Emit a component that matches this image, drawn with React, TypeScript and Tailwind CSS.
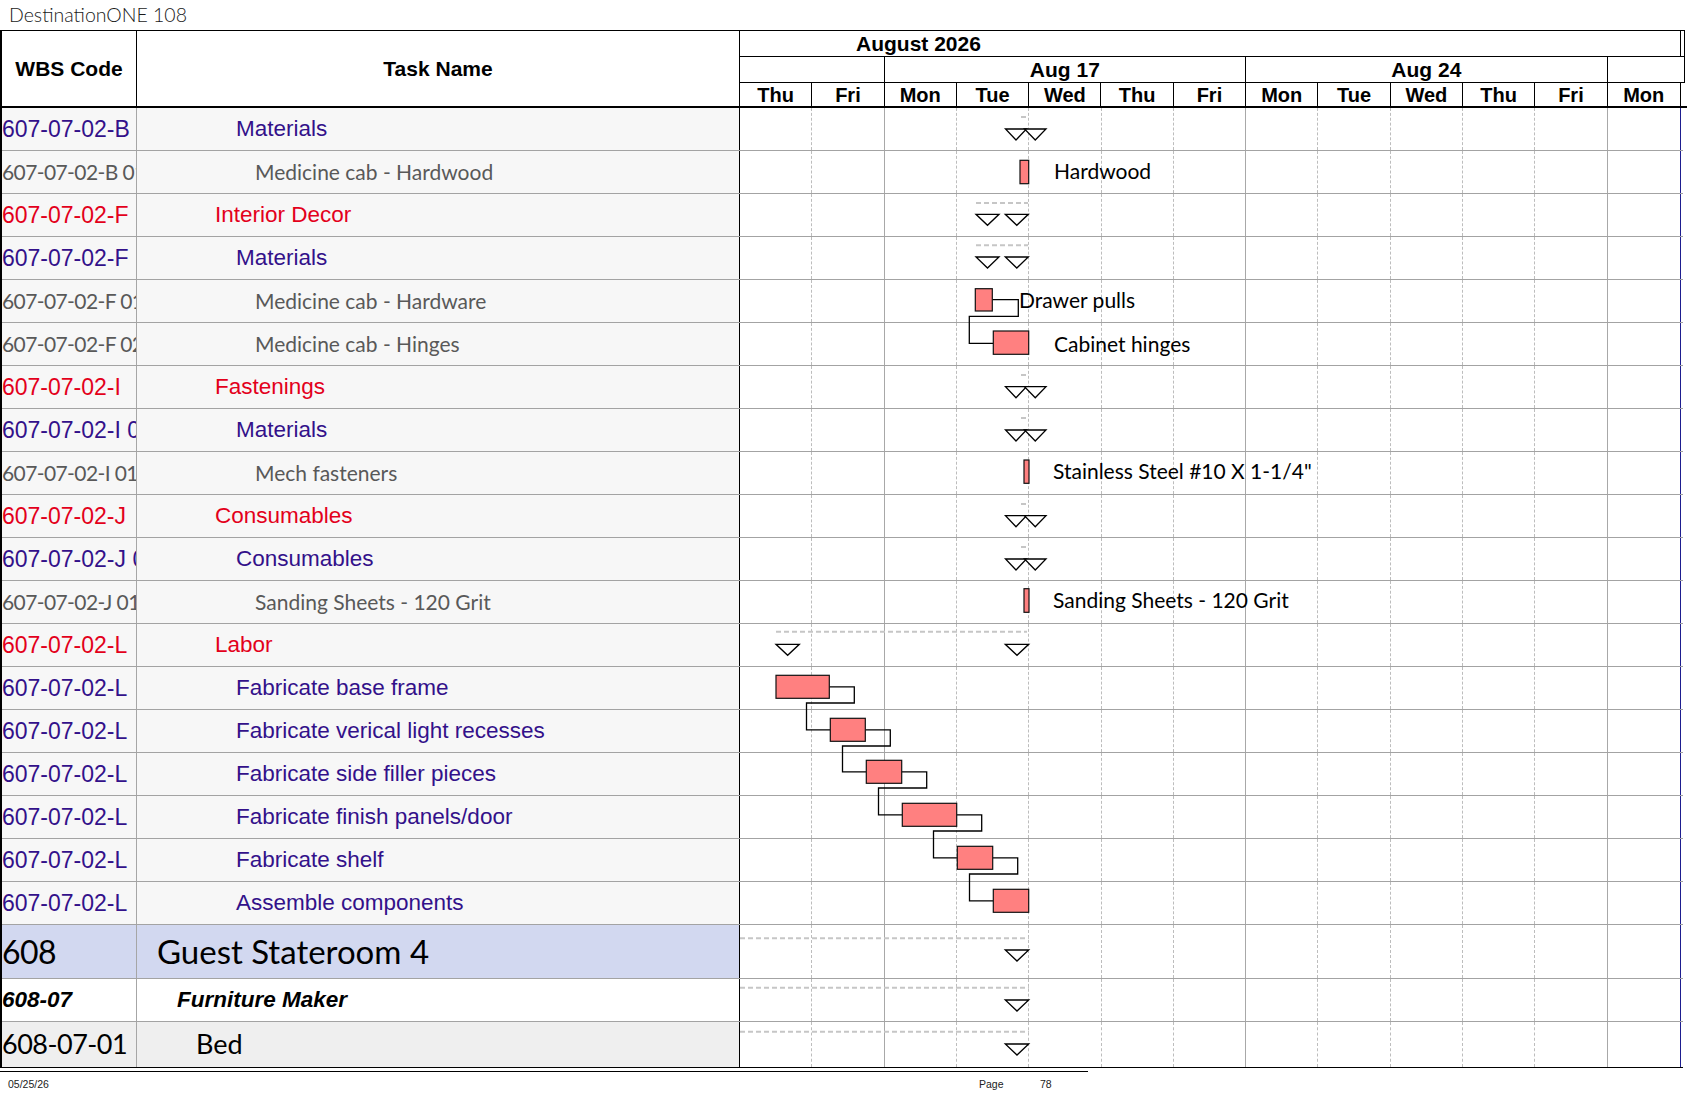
import React from "react";

const ARIAL = "font-['Liberation_Sans',Arial,sans-serif]";
const CALI = "font-['Lato','Carlito',sans-serif]";

const DAYS = ["Thu", "Fri", "Mon", "Tue", "Wed", "Thu", "Fri", "Mon", "Tue", "Wed", "Thu", "Fri", "Mon"];

type Kind = "s1" | "s2" | "t";

const rows: { code: string; name: string; kind: Kind }[] = [
  { code: "607-07-02-B", name: "Materials", kind: "s2" },
  { code: "607-07-02-B 01", name: "Medicine cab - Hardwood", kind: "t" },
  { code: "607-07-02-F", name: "Interior Decor", kind: "s1" },
  { code: "607-07-02-F", name: "Materials", kind: "s2" },
  { code: "607-07-02-F 01", name: "Medicine cab - Hardware", kind: "t" },
  { code: "607-07-02-F 02", name: "Medicine cab - Hinges", kind: "t" },
  { code: "607-07-02-I", name: "Fastenings", kind: "s1" },
  { code: "607-07-02-I 01", name: "Materials", kind: "s2" },
  { code: "607-07-02-I 01 01", name: "Mech fasteners", kind: "t" },
  { code: "607-07-02-J", name: "Consumables", kind: "s1" },
  { code: "607-07-02-J 01", name: "Consumables", kind: "s2" },
  { code: "607-07-02-J 01 01", name: "Sanding Sheets - 120 Grit", kind: "t" },
  { code: "607-07-02-L", name: "Labor", kind: "s1" },
  { code: "607-07-02-L", name: "Fabricate base frame", kind: "s2" },
  { code: "607-07-02-L", name: "Fabricate verical light recesses", kind: "s2" },
  { code: "607-07-02-L", name: "Fabricate side filler pieces", kind: "s2" },
  { code: "607-07-02-L", name: "Fabricate finish panels/door", kind: "s2" },
  { code: "607-07-02-L", name: "Fabricate shelf", kind: "s2" },
  { code: "607-07-02-L", name: "Assemble components", kind: "s2" },
];

const codeStyle: Record<Kind, string> = {
  s1: `${ARIAL} text-[23px] text-[#e3001b]`,
  s2: `${ARIAL} text-[23px] text-[#33118a]`,
  t: `${CALI} text-[21px] tracking-[-0.6px] text-[#595959]`,
};

const nameStyle: Record<Kind, string> = {
  s1: `${ARIAL} text-[22.5px] text-[#e3001b] pl-[78px]`,
  s2: `${ARIAL} text-[22.5px] text-[#33118a] pl-[99px]`,
  t: `${CALI} text-[21px] text-[#595959] pl-[118px]`,
};

function DayGrid() {
  return (
    <div className="grid h-full grid-cols-[repeat(13,minmax(0,1fr))]">
      {DAYS.map((_, i) => (
        <div
          key={i}
          className={
            i === 12
              ? ""
              : i === 1 || i === 6 || i === 11
              ? "border-r border-[#a8a8a8]"
              : "border-r border-dashed border-[#bdbdbd]"
          }
        />
      ))}
    </div>
  );
}

// summary milestones (triangles) : x, top, width
const tris: [number, number, number][] = [
  [1005.5, 129, 21], [1024.5, 129, 21.5],
  [976, 214.3, 23], [1005.3, 214.3, 23],
  [976, 257, 23], [1005.3, 257, 23],
  [1005.5, 386.7, 21], [1024.5, 386.7, 21.5],
  [1005.5, 430, 21], [1024.5, 430, 21.5],
  [1005.5, 515.7, 21], [1024.5, 515.7, 21.5],
  [1005.5, 559, 21], [1024.5, 559, 21.5],
  [776, 644.3, 23.3], [1005.3, 644.3, 23.4],
  [1005.3, 950, 23.4],
  [1005.3, 1000, 23.4],
  [1005.3, 1044, 23.4],
];

// summary dashed lines: y, x1, x2
const dashes: [number, number, number][] = [
  [117, 1021, 1029],
  [203, 976, 1028],
  [245.3, 976, 1028],
  [375, 1021, 1029],
  [418, 1021, 1029],
  [504, 1021, 1029],
  [547, 1021, 1029],
  [631.7, 776, 1027],
  [938.3, 740, 1029],
  [987.7, 740, 1029],
  [1031.7, 740, 1029],
];

const bars = [
  { x: 1020, y: 160.3, w: 8.7, h: 23.4 },
  { x: 975.3, y: 288.7, w: 17, h: 22.3 },
  { x: 993.3, y: 331, w: 35.4, h: 23.3 },
  { x: 1024, y: 460, w: 5, h: 23.3 },
  { x: 1024, y: 588.7, w: 5, h: 23.6 },
];

const labor = [
  { x: 776, y: 675.3, w: 53.3 },
  { x: 830.3, y: 718.3, w: 35 },
  { x: 866.3, y: 760.3, w: 35.4 },
  { x: 902.3, y: 803.3, w: 54.4 },
  { x: 957.3, y: 846.3, w: 35.4 },
  { x: 993.3, y: 889.3, w: 35.4 },
];

function ChartArt() {
  const links = labor.slice(0, -1).map((b, i) => {
    const n = labor[i + 1];
    const y1 = b.y + 11.5;
    const xr = b.x + b.w + 25;
    const yd = b.y + 23 + 4.7;
    const xl = n.x - 23.8;
    const y2 = n.y + 11.5;
    return `M${b.x + b.w} ${y1}H${xr}V${yd}H${xl}V${y2}H${n.x}`;
  });
  return (
    <svg
      className="pointer-events-none absolute left-0 top-0"
      width={1687}
      height={960}
      viewBox="0 108 1687 960"
    >
      {dashes.map(([y, x1, x2], i) => (
        <line key={i} x1={x1} x2={x2} y1={y} y2={y} stroke="#c6c6c6" strokeWidth={2} strokeDasharray="5 3" />
      ))}
      {tris.map(([x, y, w], i) => (
        <polygon
          key={i}
          points={`${x},${y} ${x + w},${y} ${x + w / 2},${y + 11}`}
          fill="white"
          stroke="#000"
          strokeWidth={1.3}
        />
      ))}
      <path d="M992.3 299.7H1018.3V316.3H969.3V343.3H993.3" fill="none" stroke="#000" strokeWidth={1.3} />
      {links.map((d, i) => (
        <path key={i} d={d} fill="none" stroke="#000" strokeWidth={1.3} />
      ))}
      {bars.map((b, i) => (
        <rect key={i} x={b.x} y={b.y} width={b.w} height={b.h} fill="#ff8080" stroke="#111" strokeWidth={1.2} />
      ))}
      {labor.map((b, i) => (
        <rect key={i} x={b.x} y={b.y} width={b.w} height={23} fill="#ff8080" stroke="#111" strokeWidth={1.2} />
      ))}
    </svg>
  );
}

function Labels() {
  const cls = `${CALI} absolute h-[26px] whitespace-nowrap text-[21px] leading-[26px] text-black`;
  return (
    <>
      <span className={`${cls} left-[1054px] top-[50px]`}>Hardwood</span>
      <span className={`${cls} left-[1019px] top-[179px]`}>Drawer pulls</span>
      <span className={`${cls} left-[1054px] top-[223px]`}>Cabinet hinges</span>
      <span className={`${cls} left-[1053px] top-[350px]`}>Stainless Steel #10 X 1-1/4"</span>
      <span className={`${cls} left-[1053px] top-[479px]`}>Sanding Sheets - 120 Grit</span>
    </>
  );
}

function Header() {
  return (
    <div className="flex w-[1687px] border-b-2 border-black">
      <div className="grid grid-cols-[135px_603px_945px] border-l-2 border-t border-black">
        <div className={`${ARIAL} flex h-[75px] items-center justify-center border-r border-black text-[21px] font-bold`}>
          WBS Code
        </div>
        <div className={`${ARIAL} flex items-center justify-center border-r border-black text-[21px] font-bold`}>
          Task Name
        </div>
        <div className={`${ARIAL} flex flex-col font-bold leading-none text-black`}>
          <div className="flex h-[25px]">
            <div className="flex w-[941px] items-center border-r border-black pl-[116px] text-[21px]">August 2026</div>
            <div className="w-[4px] border-r border-black" />
          </div>
          <div className="grid h-[26px] grid-cols-[repeat(12,72.3077px)_73.3077px_4px] border-t border-black text-[21px]">
            <div className="col-span-2 border-r border-black" />
            <div className="col-span-5 flex items-center justify-center border-r border-black">Aug 17</div>
            <div className="col-span-5 flex items-center justify-center border-r border-black">Aug 24</div>
            <div className="col-span-2 border-r border-black" />
          </div>
          <div className="grid h-[24px] grid-cols-[repeat(12,72.3077px)_73.3077px] border-t border-black text-[20px]">
            {DAYS.map((d, i) => (
              <div key={i} className="flex items-center justify-center border-r border-black">
                {d}
              </div>
            ))}
          </div>
        </div>
      </div>
    </div>
  );
}

export default function App() {
  return (
    <div className="h-[1097px] w-[1687px] overflow-hidden bg-white text-black">
      <div className={`${CALI} flex h-[30px] items-center pl-[9px] text-[19.5px] font-light text-[#1a1a1a]`}>
        DestinationONE 108
      </div>
      <Header />
      <div className="relative">
        <div className="w-[1683px] border-l-2 border-black">
          {rows.map((r, i) => (
            <div key={i} className="grid h-[43px] grid-cols-[135px_603px_941px] border-b border-[#a3a3a3]">
              <div className={`flex items-center overflow-hidden whitespace-nowrap border-r border-[#a6a6a6] bg-[#f7f7f7] ${codeStyle[r.kind]}`}>
                {r.code}
              </div>
              <div className={`flex items-center whitespace-nowrap border-r border-black bg-[#f7f7f7] ${nameStyle[r.kind]}`}>
                {r.name}
              </div>
              <div className="border-r border-[#1d1d8f]">
                <DayGrid />
              </div>
            </div>
          ))}

          <div className="grid h-[54px] grid-cols-[135px_603px_941px] border-b border-[#a3a3a3]">
            <div className={`${CALI} flex items-center overflow-hidden whitespace-nowrap border-r border-[#a6a6a6] bg-[#d2d8f0] text-[32px] tracking-[-0.5px]`}>
              608
            </div>
            <div className={`${CALI} flex items-center whitespace-nowrap border-r border-black bg-[#d2d8f0] pl-[20px] text-[33px]`}>
              Guest Stateroom 4
            </div>
            <div className="border-r border-[#1d1d8f]">
              <DayGrid />
            </div>
          </div>

          <div className="grid h-[43px] grid-cols-[135px_603px_941px] border-b border-[#a3a3a3]">
            <div className={`${ARIAL} flex items-center overflow-hidden whitespace-nowrap border-r border-[#a6a6a6] text-[22.5px] font-bold italic`}>
              608-07
            </div>
            <div className={`${ARIAL} flex items-center whitespace-nowrap border-r border-black pl-[40px] text-[22.5px] font-bold italic`}>
              Furniture Maker
            </div>
            <div className="border-r border-[#1d1d8f]">
              <DayGrid />
            </div>
          </div>

          <div className="grid h-[46px] grid-cols-[135px_603px_941px] border-b border-black">
            <div className={`${CALI} flex items-center overflow-hidden whitespace-nowrap border-r border-[#a6a6a6] bg-[#efefef] text-[27px] tracking-[-0.5px]`}>
              608-07-01
            </div>
            <div className={`${CALI} flex items-center whitespace-nowrap border-r border-black bg-[#efefef] pl-[59px] text-[27px]`}>
              Bed
            </div>
            <div className="border-r border-[#1d1d8f]">
              <DayGrid />
            </div>
          </div>
        </div>
        <ChartArt />
        <Labels />
      </div>

      <div className="mt-[3px] h-px w-[1088px] bg-black" />
      <div className={`${ARIAL} mt-[6px] flex text-[10.5px] leading-[12px] text-[#222]`}>
        <span className="w-[979px] pl-[8px]">05/25/26</span>
        <span className="w-[61px]">Page</span>
        <span>78</span>
      </div>
    </div>
  );
}
